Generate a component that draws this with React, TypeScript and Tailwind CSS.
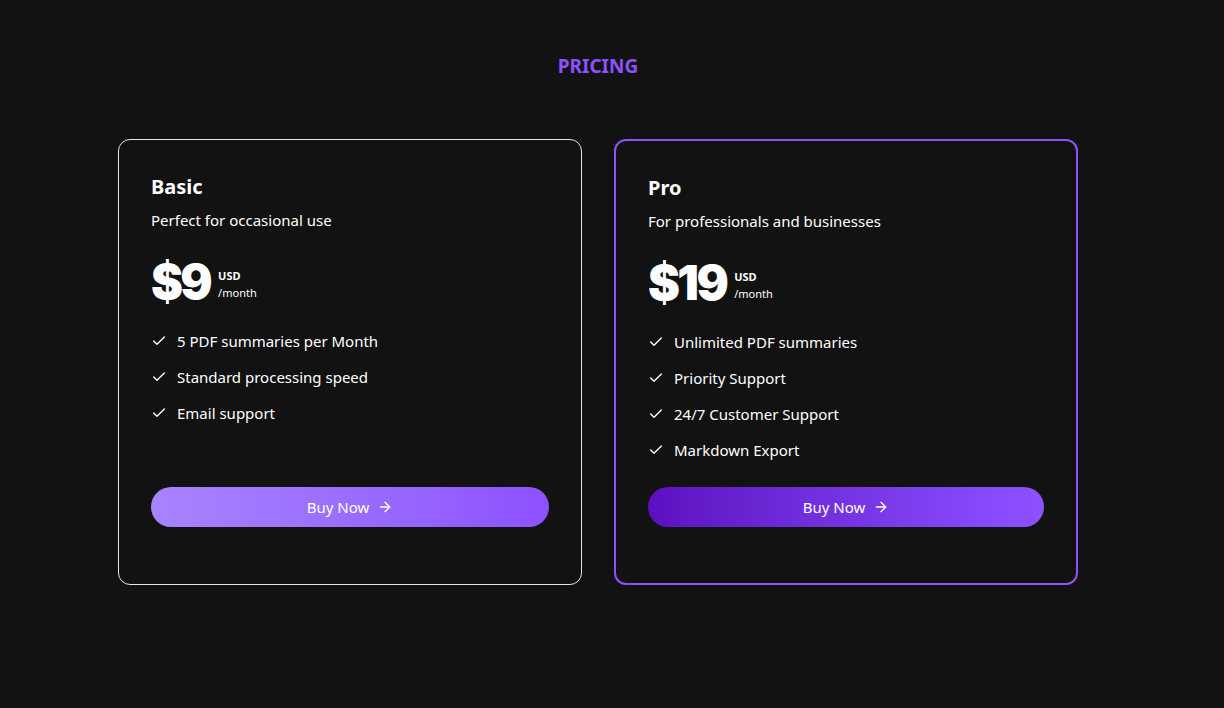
import React from "react";
import { Check, ArrowRight } from "lucide-react";

type Plan = {
  name: string;
  desc: string;
  price: string;
  features: string[];
  pro?: boolean;
};

const plans: Plan[] = [
  {
    name: "Basic",
    desc: "Perfect for occasional use",
    price: "$9",
    features: ["5 PDF summaries per Month", "Standard processing speed", "Email support"],
  },
  {
    name: "Pro",
    desc: "For professionals and businesses",
    price: "$19",
    features: ["Unlimited PDF summaries", "Priority Support", "24/7 Customer Support", "Markdown Export"],
    pro: true,
  },
];

function Card({ plan }: { plan: Plan }) {
  return (
    <div
      className={
        plan.pro
          ? "flex w-[464px] flex-col rounded-xl border-2 border-violet-500 px-8 pt-[33px] pb-14"
          : "flex w-[464px] flex-col rounded-xl border border-neutral-200 px-8 pt-[33px] pb-[57px]"
      }
    >
      <h3 className="text-xl leading-7 font-bold text-white">{plan.name}</h3>
      <p className="mt-[7px] text-[15px] leading-6 text-white">{plan.desc}</p>
      <div className="mt-[26px] flex items-center gap-2">
        <span className="font-['Inter',sans-serif] text-[48px] leading-[48px] font-black tracking-[-0.055em] text-white">
          {plan.price}
        </span>
        <div className="mt-1 flex flex-col text-[11px] leading-[17px] text-white">
          <span className="font-bold">USD</span>
          <span>/month</span>
        </div>
      </div>
      <ul className="mt-[23px] flex flex-col gap-3">
        {plan.features.map((f) => (
          <li key={f} className="flex items-center gap-[10px] text-[15px] leading-6 text-white">
            <Check className="h-4 w-4" strokeWidth={2} />
            <span>{f}</span>
          </li>
        ))}
      </ul>
      <div className="mt-auto pt-[25px]">
        <button
          className={
            plan.pro
              ? "flex h-10 w-full items-center justify-center gap-2 rounded-full bg-gradient-to-r from-violet-800 to-violet-500 text-[15px] text-white"
              : "flex h-10 w-full items-center justify-center gap-2 rounded-full bg-gradient-to-r from-violet-400 to-violet-500 text-[15px] text-white"
          }
        >
          <span>Buy Now</span>
          <ArrowRight className="h-4 w-4" strokeWidth={2} />
        </button>
      </div>
    </div>
  );
}

export default function App() {
  return (
    <div className="min-h-screen w-full bg-[#121212] font-['Noto_Sans',sans-serif]">
      <div className="flex w-[1196px] flex-col items-center pt-[52px]">
        <h2 className="text-[19px] leading-7 font-bold text-violet-500">PRICING</h2>
        <div className="mt-[59px] flex items-stretch gap-8">
          {plans.map((p) => (
            <Card key={p.name} plan={p} />
          ))}
        </div>
      </div>
    </div>
  );
}
